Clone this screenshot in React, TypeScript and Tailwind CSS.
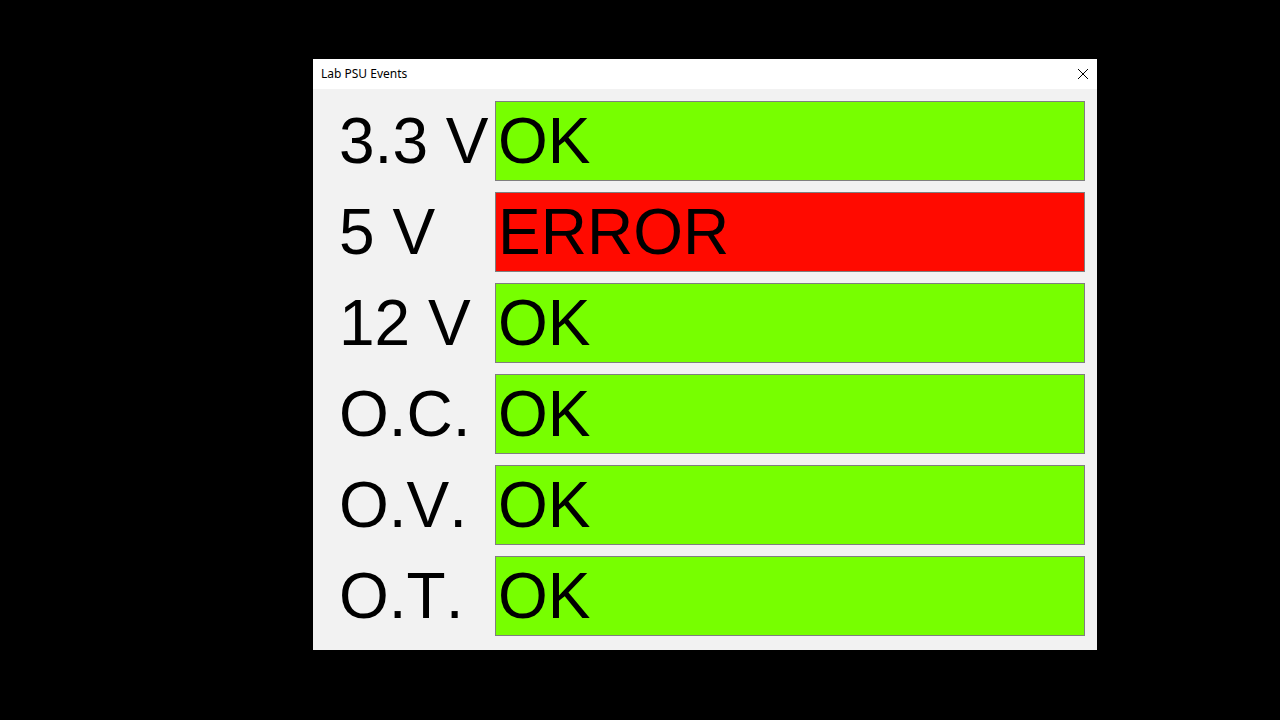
import React from 'react';

const rows = [
    { label: '3.3 V', ok: true },
    { label: '5 V', ok: false },
    { label: '12 V', ok: true },
    { label: 'O.C.', ok: true },
    { label: 'O.V.', ok: true },
    { label: 'O.T.', ok: true },
];

export default function App() {
    return (
        <div className="w-[1280px] h-[720px] bg-black pt-[59px] pl-[313px]">
            <div className="w-[784px] h-[591px] flex flex-col bg-[#f2f2f2]">
                {/* Title bar */}
                <div className="h-[30px] bg-white flex items-center justify-between pl-2 pr-[8px]">
                    <span className="text-[12px] text-black" style={{ fontFamily: '"Noto Sans", sans-serif' }}>Lab PSU Events</span>
                    <svg width="12" height="12" viewBox="0 0 12 12">
                        <path d="M1 1 L11 11 M11 1 L1 11" stroke="#000" strokeWidth="1" />
                    </svg>
                </div>

                {/* Status rows */}
                <div className="flex flex-col gap-[11px] pt-3 pr-3 font-['Liberation_Sans',Arial,sans-serif] [font-kerning:none]">
                    {rows.map((r) => (
                        <div key={r.label} className="flex h-[80px]">
                            <div className="w-[182px] pl-[26px] text-[64px] leading-[80px] text-black">{r.label}</div>
                            <div className={`flex-1 border border-[#7f7f7f] pl-[2px] text-[64px] leading-[78px] text-black ${r.ok ? 'bg-[#77ff00]' : 'bg-[#ff0a00]'}`}>
                                {r.ok ? 'OK' : 'ERROR'}
                            </div>
                        </div>
                    ))}
                </div>
            </div>
        </div>
    );
}
